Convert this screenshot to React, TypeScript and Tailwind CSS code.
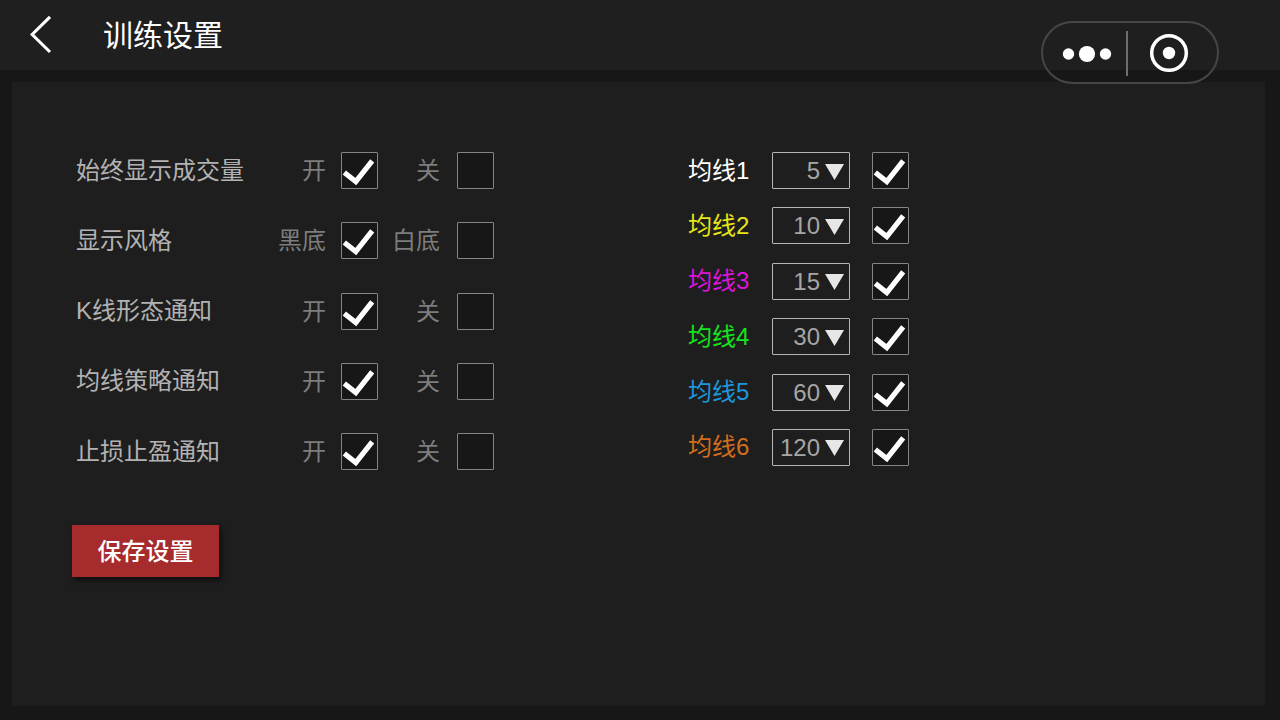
import { useState } from "react";

type Toggle = { name: string; title: string; options: [string, string] };

const toggles: Toggle[] = [
  { name: "volume", title: "始终显示成交量", options: ["开", "关"] },
  { name: "theme", title: "显示风格", options: ["黑底", "白底"] },
  { name: "pattern", title: "K线形态通知", options: ["开", "关"] },
  { name: "strategy", title: "均线策略通知", options: ["开", "关"] },
  { name: "stop", title: "止损止盈通知", options: ["开", "关"] },
];

const periods = [5, 10, 15, 30, 60, 120];

const averages = [
  { title: "均线1", period: 5, color: "text-white" },
  { title: "均线2", period: 10, color: "text-[#e6e619]" },
  { title: "均线3", period: 15, color: "text-[#dc14dc]" },
  { title: "均线4", period: 30, color: "text-[#14e61e]" },
  { title: "均线5", period: 60, color: "text-[#1e96dc]" },
  { title: "均线6", period: 120, color: "text-[#d26e1e]" },
];

const boxClass =
  "peer col-start-1 row-start-1 size-[37px] appearance-none rounded-[1px] border border-[#858585] bg-[#171717]";

function CheckMark() {
  return (
    <svg
      viewBox="0 0 37 37"
      className="pointer-events-none invisible col-start-1 row-start-1 size-[37px] peer-checked:visible"
      aria-hidden="true"
    >
      <path d="M3.3 20.5L14.8 29.6L31.2 8.8" fill="none" stroke="#fff" strokeWidth="5.2" />
    </svg>
  );
}

function ToggleRow({ name, title, options }: Toggle) {
  const [value, setValue] = useState(0);
  return (
    <div role="radiogroup" aria-labelledby={name} className="flex items-center">
      <span id={name} className="w-[188px] text-[#b2b2b2]">
        {title}
      </span>
      {options.map((option, i) => (
        <label
          key={option}
          className={
            i === 0
              ? "flex w-[114px] items-center justify-end gap-[15px] text-[#7d7d7d]"
              : "flex w-[116px] items-center justify-end gap-[17px] text-[#7d7d7d]"
          }
        >
          <span className="pt-px">{option}</span>
          <span className="grid">
            <input
              type="radio"
              name={name}
              checked={value === i}
              onChange={() => setValue(i)}
              className={boxClass}
            />
            <CheckMark />
          </span>
        </label>
      ))}
    </div>
  );
}

function AverageRow({ title, period, color }: (typeof averages)[number]) {
  return (
    <div className="flex items-center">
      <label htmlFor={title} className={`w-[84px] ${color}`}>
        {title}
      </label>
      <span className="grid items-center">
        <select
          id={title}
          defaultValue={period}
          className="col-start-1 row-start-1 h-[37px] w-[78px] appearance-none rounded-[1px] border border-[#b4b4b4] bg-transparent pr-[29px] text-right text-[#a6a6a6] [text-align-last:right]"
        >
          {periods.map((p) => (
            <option key={p} value={p}>
              {p}
            </option>
          ))}
        </select>
        <svg
          viewBox="0 0 20 16"
          className="pointer-events-none col-start-1 row-start-1 mt-0.5 mr-[5px] h-4 w-5 justify-self-end"
          aria-hidden="true"
        >
          <path d="M0 0H19L9.5 16Z" fill="#e6e6e6" />
        </svg>
      </span>
      <span className="ml-[22px] grid">
        <input type="checkbox" defaultChecked aria-label={title} className={boxClass} />
        <CheckMark />
      </span>
    </div>
  );
}

export default function App() {
  return (
    <div className="relative flex min-h-screen flex-col bg-[#171717] font-['Liberation_Sans','Noto_Sans_CJK_SC',sans-serif] text-2xl leading-9">
      <header className="flex h-[70px] items-center bg-[#1f1f1f] pl-7 text-white">
        <button type="button" aria-label="返回">
          <svg viewBox="0 0 26 40" className="h-10 w-[26px]" aria-hidden="true">
            <path d="M22 1.8L4.2 19.5L22 37" fill="none" stroke="#fff" strokeWidth="3.1" />
          </svg>
        </button>
        <h1 className="ml-[49px] pt-0.5 text-[30px]">训练设置</h1>
      </header>

      <div className="absolute top-[21px] right-[61px] flex h-[63px] w-[178px] items-center rounded-full border-2 border-[#464646]">
        <button type="button" aria-label="更多" className="flex w-[83px] justify-end pr-[14px]">
          <svg viewBox="0 0 50 20" className="h-5 w-[50px]" fill="#fff" aria-hidden="true">
            <circle cx="6.5" cy="11" r="5.7" />
            <circle cx="25" cy="11" r="8.1" />
            <circle cx="43.5" cy="11" r="5.7" />
          </svg>
        </button>
        <span className="mt-px h-[45px] w-0.5 bg-[#6e6e6e]" />
        <button type="button" aria-label="关闭" className="flex grow pl-[21px]">
          <svg viewBox="0 0 40 40" className="size-10" aria-hidden="true">
            <circle cx="20" cy="20" r="17.3" fill="none" stroke="#fff" strokeWidth="3.5" />
            <circle cx="20" cy="20" r="6.2" fill="#fff" />
          </svg>
        </button>
      </div>

      <main className="mt-3 mr-[15px] mb-[14px] ml-3 grow bg-[#1e1e1e] pt-[70px] pl-[60px]">
        <div className="flex items-start gap-[194px] pl-1">
          <div className="flex h-[318px] flex-col justify-between">
            {toggles.map((t) => (
              <ToggleRow key={t.name} {...t} />
            ))}
          </div>
          <div className="flex h-[314px] flex-col justify-between">
            {averages.map((a) => (
              <AverageRow key={a.title} {...a} />
            ))}
          </div>
        </div>
        <button
          type="button"
          className="mt-[55px] h-[52px] w-[147px] bg-[#a52b2d] pt-0.5 font-medium text-white shadow-[2px_3px_5px_rgba(0,0,0,0.6)]"
        >
          保存设置
        </button>
      </main>
    </div>
  );
}
